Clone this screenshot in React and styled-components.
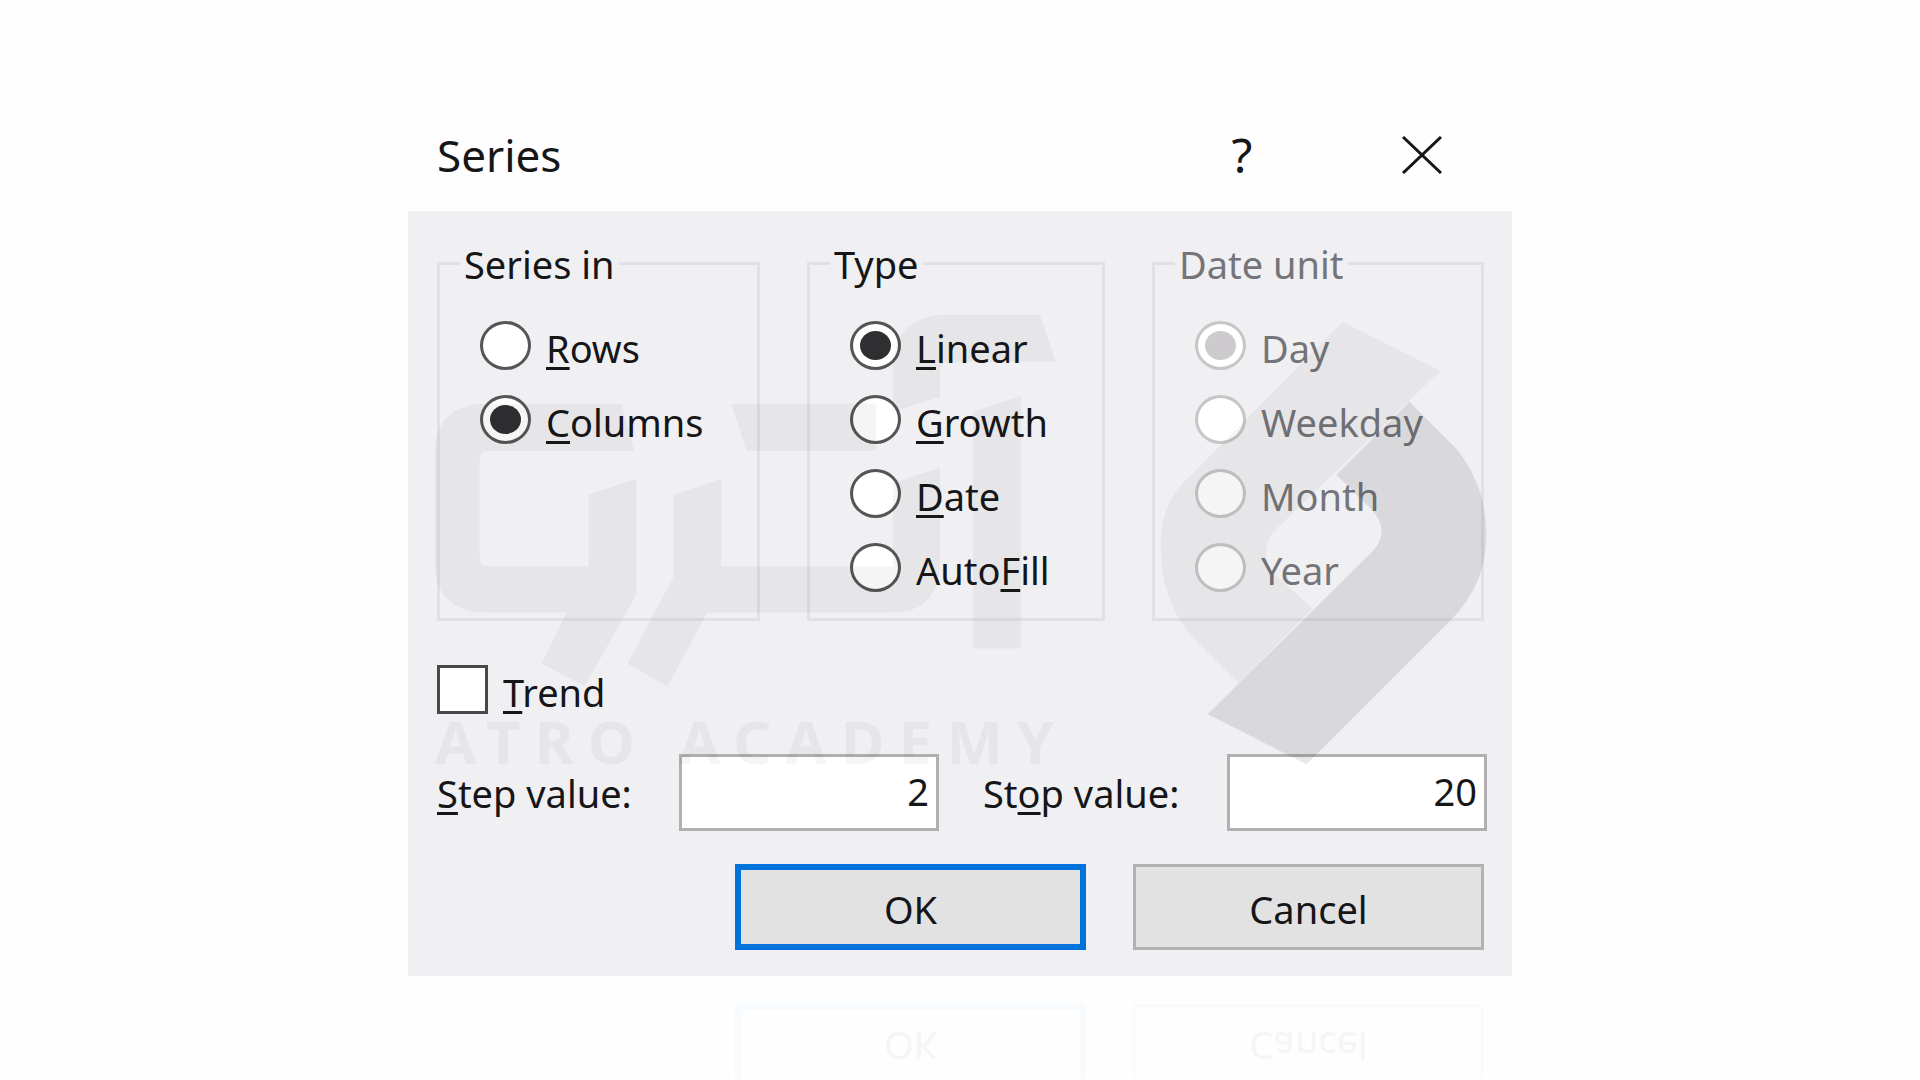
import React from "react";
import styled, { createGlobalStyle } from "styled-components";

const GlobalStyle = createGlobalStyle`
  *, *::before, *::after { box-sizing: border-box; }
  body {
    margin: 0;
    background: #fefefe;
    overflow-x: hidden;
    color: #161618;
    font-family: "Noto Sans", "Open Sans", sans-serif;
    font-size: 38px;
    line-height: 48px;
  }
  button, input { font: inherit; color: inherit; margin: 0; }
`;

const Dialog = styled.main`
  width: 100%;
  max-width: 1104px;
  margin: 100px auto 0;
`;

const TitleBar = styled.header`
  display: flex;
  align-items: center;
  padding: 25px 0 26px 29px;
  line-height: 60px;
`;

const Title = styled.h1`
  flex: 1;
  margin: 0;
  font-size: 44px;
  font-weight: 400;
`;

const WindowButton = styled.button`
  display: flex;
  align-items: center;
  justify-content: center;
  width: 180px;
  height: 60px;
  padding: 0;
  border: 0;
  background: none;
  font-size: 48px;
`;

const Panel = styled.form`
  position: relative;
  display: flex;
  flex-direction: column;
  padding: 28px 25px 26px 29px;
  background: #f0f0f2;
`;

const Groups = styled.div`
  display: grid;
  grid-template-columns: 323fr 298fr 332fr;
  gap: 47px;
  padding-right: 3px;
`;

const Group = styled.fieldset`
  min-width: 0;
  margin: 0;
  padding: 0 0 14px 20px;
  border: 3px solid #e1e1e3;
  color: ${(p) => (p.disabled ? "#747479" : "inherit")};
`;

const Legend = styled.legend`
  padding: 2px 4px 0;
  line-height: 46px;
`;

const Options = styled.div`
  padding: 21px 0 0 20px;
`;

const Choice = styled.label`
  display: flex;
  align-items: center;
  gap: 15px;
  height: 74px;
`;

const ChoiceText = styled.span`
  padding-top: 6px;
`;

const Key = styled.u`
  text-decoration-thickness: 3px;
  text-underline-offset: 4px;
  text-decoration-skip-ink: none;
`;

const Radio = styled.input`
  appearance: none;
  display: grid;
  place-items: center;
  flex: none;
  width: 51px;
  height: 49px;
  border: 3px solid #555558;
  border-radius: 50%;
  background: #fff;

  &:checked::before {
    content: "";
    width: 31px;
    height: 29px;
    border-radius: 50%;
    background: #2f2f31;
  }
  &:disabled { border-color: #c6c6c8; }
  &:disabled:checked::before { background: #cdcbcd; }
`;

const Checkbox = styled.input`
  appearance: none;
  flex: none;
  width: 51px;
  height: 49px;
  border: 3px solid #48484a;
  background: #fff;

  &:checked { background: #2f2f31; }
`;

const TrendRow = styled.div`
  display: flex;
  margin: 31px 0 28px;
`;

const Values = styled.div`
  display: grid;
  grid-template-columns: 242fr 260fr 288fr 260fr;
  align-items: center;
`;

const ValueLabel = styled.label`
  padding-left: ${(p) => (p.$spaced ? "44px" : "0")};
  white-space: nowrap;
`;

const ValueInput = styled.input`
  width: 100%;
  min-width: 0;
  height: 77px;
  padding: 0 7px 4px;
  border: 3px solid #b0b0b3;
  border-radius: 0;
  background: #fff;
  text-align: right;
`;

const Actions = styled.div`
  display: grid;
  grid-template-columns: 351fr 351fr;
  gap: 47px;
  padding: 33px 3px 0 298px;
`;

const ActionButton = styled.button`
  height: 86px;
  padding: 3px 0 0;
  border: ${(p) => (p.$primary ? "6px solid #0072dc" : "3px solid #b2b2b4")};
  background: #e2e2e3;
`;

const Reflection = styled.div`
  display: grid;
  grid-template-columns: 351fr 351fr;
  gap: 47px;
  height: 103px;
  padding: 28px 28px 0 327px;
  overflow: hidden;
  color: #f5f5f7;
`;

const ReflectedButton = styled.div`
  display: flex;
  align-items: center;
  justify-content: center;
  height: 86px;
  border: ${(p) => (p.$primary ? "6px solid #f8fbfe" : "3px solid #fbfbfc")};
  transform: scaleY(-1);
`;

const Watermark = styled.svg`
  position: absolute;
  inset: 0;
  width: 100%;
  height: 100%;
  pointer-events: none;
`;

const MarkText = styled.text`
  font-size: 60px;
  font-weight: 700;
  letter-spacing: 14px;
`;

function CloseIcon() {
  return (
    <svg width="40" height="38" viewBox="0 0 40 38" fill="none" stroke="currentColor" strokeWidth="3" aria-hidden="true">
      <path d="M1 1 39 37M39 1 1 37" />
    </svg>
  );
}

function AccessText({ text }) {
  const at = text.indexOf("_");
  if (at < 0) return text;
  return (
    <>
      {text.slice(0, at)}
      <Key>{text[at + 1]}</Key>
      {text.slice(at + 2)}
    </>
  );
}

function RadioGroup({ title, name, options, selected, disabled }) {
  return (
    <Group disabled={disabled}>
      <Legend>{title}</Legend>
      <Options>
        {options.map((option) => (
          <Choice key={option}>
            <Radio type="radio" name={name} defaultChecked={option === selected} />
            <ChoiceText><AccessText text={option} /></ChoiceText>
          </Choice>
        ))}
      </Options>
    </Group>
  );
}

function BrandMark() {
  return (
    <Watermark viewBox="408 211 1104 766" aria-hidden="true">
      <g fill="#14141e" fillOpacity="0.042">
        <path d="M621 404H486Q434 404 434 456V561Q434 613 486 613H566L541 664L584 687L636 595V479L588 495V567H489Q479 567 479 557V461Q479 451 489 451H634Z" />
        <path d="M731 404H876V451H746Z" />
        <path d="M673 495L721 479V567H893V483L940 468V561Q940 613 892 613H707L667 687L627 664L652 617L673 578Z" />
        <path d="M893 412V370Q893 315 948 315H1040L1056 362H950Q940 362 940 372V397Z" />
        <path d="M973 412L1021 396V649H973Z" />
        <path d="M1343 322L1441 371L1273 533Q1260 554 1273 573L1313 609L1239 684L1195 640Q1161 605 1161 545Q1161 501 1190 477Z" />
        <MarkText x="434" y="765">ATRO ACADEMY</MarkText>
      </g>
      <path
        fill="#14141e"
        fillOpacity="0.1"
        d="M1410 402L1337 475L1370 508Q1393 530 1373 552L1208 715L1307 765L1452 620Q1487 585 1487 535Q1487 486 1457 449Z"
      />
    </Watermark>
  );
}

export default function App() {
  return (
    <>
      <GlobalStyle />
      <Dialog>
        <TitleBar>
          <Title>Series</Title>
          <WindowButton type="button" aria-label="Help">?</WindowButton>
          <WindowButton type="button" aria-label="Close"><CloseIcon /></WindowButton>
        </TitleBar>
        <Panel onSubmit={(e) => e.preventDefault()}>
          <Groups>
            <RadioGroup title="Series in" name="direction" selected="_Columns" options={["_Rows", "_Columns"]} />
            <RadioGroup title="Type" name="type" selected="_Linear" options={["_Linear", "_Growth", "_Date", "Auto_Fill"]} />
            <RadioGroup title="Date unit" name="unit" selected="Day" options={["Day", "Weekday", "Month", "Year"]} disabled />
          </Groups>
          <TrendRow>
            <Choice>
              <Checkbox type="checkbox" />
              <ChoiceText><AccessText text="_Trend" /></ChoiceText>
            </Choice>
          </TrendRow>
          <Values>
            <ValueLabel htmlFor="step"><AccessText text="_Step value:" /></ValueLabel>
            <ValueInput id="step" type="text" inputMode="decimal" defaultValue="2" />
            <ValueLabel htmlFor="stop" $spaced><AccessText text="St_op value:" /></ValueLabel>
            <ValueInput id="stop" type="text" inputMode="decimal" defaultValue="20" />
          </Values>
          <Actions>
            <ActionButton type="submit" $primary>OK</ActionButton>
            <ActionButton type="button">Cancel</ActionButton>
          </Actions>
          <BrandMark />
        </Panel>
        <Reflection aria-hidden="true">
          <ReflectedButton $primary>OK</ReflectedButton>
          <ReflectedButton>Cancel</ReflectedButton>
        </Reflection>
      </Dialog>
    </>
  );
}
